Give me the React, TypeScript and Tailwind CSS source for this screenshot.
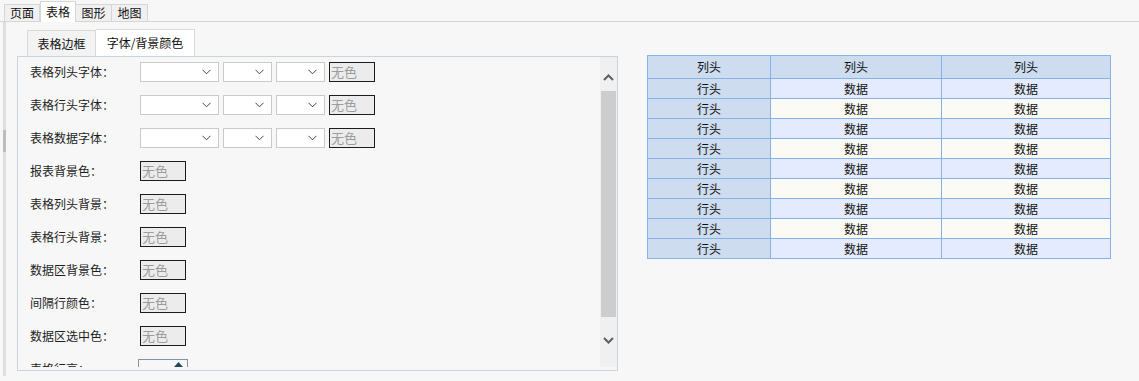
const FONT = '[font-family:"Noto_Sans_CJK_SC","Noto_Sans",sans-serif]';

const topTabs = ['页面', '表格', '图形', '地图'];

function Chevron({ className = '' }: { className?: string }) {
  return (
    <svg width="9" height="6" viewBox="0 0 9 6" className={className}>
      <polyline points="0.5,0.8 4.5,4.8 8.5,0.8" fill="none" stroke="#444" strokeWidth="1" />
    </svg>
  );
}

function Select({ width }: { width: string }) {
  return (
    <div className={`${width} h-[20px] bg-white border border-[#cacaca] flex items-center justify-end pr-[7px]`}>
      <Chevron />
    </div>
  );
}

function ColorBox() {
  return (
    <div className="w-[46px] h-[20px] border border-[#1c1c1c] bg-[#ececec] text-[#9c9c9c] text-[13px] leading-[18px] pl-[1px]">
      无色
    </div>
  );
}

function Row({ label, children }: { label: string; children: React.ReactNode }) {
  return (
    <div className="flex items-center h-[20px] shrink-0">
      <div className="w-[110px] text-[12px] text-[#1e1e1e]">{label}</div>
      <div className="flex items-center gap-[4px]">{children}</div>
    </div>
  );
}

const colorRows = ['报表背景色：', '表格列头背景：', '表格行头背景：', '数据区背景色：', '间隔行颜色：', '数据区选中色：'];

export default function App() {
  return (
    <div className={`w-[1139px] h-[381px] bg-[#f7f7f7] flex flex-col overflow-hidden ${FONT}`}>
      {/* top tab bar */}
      <div className="h-[22px] flex items-end pl-[4px] border-b border-[#d6d6d6] shrink-0">
        {topTabs.map((t) =>
          t === '表格' ? (
            <div
              key={t}
              className="h-[21px] w-[36px] bg-white border border-b-0 border-[#d6d6d6] -mb-px text-[12px] text-[#111] flex items-center justify-center"
            >
              {t}
            </div>
          ) : (
            <div
              key={t}
              className="h-[17px] w-[36px] bg-[#f0f0f0] border border-b-0 border-l-0 first:border-l border-[#d6d6d6] text-[12px] text-[#111] flex items-center justify-center"
            >
              {t}
            </div>
          )
        )}
      </div>

      <div className="flex flex-1 min-h-0">
        {/* splitter gutter */}
        <div className="w-[7px] pl-[3px] pb-[5px] shrink-0 flex">
          <div className="w-[3px] bg-[#dedede] flex flex-col">
            <div className="h-[108px]" />
            <div className="h-[22px] bg-[#bdbdbd]" />
          </div>
        </div>

        <div className="flex pl-[10px] pt-[7px]">
          {/* left settings */}
          <div className="flex flex-col w-[601px]">
            <div className="flex items-end h-[27px] pl-[10px]">
              <div className="h-[26px] w-[69px] bg-[#f3f3f3] border border-b-0 border-[#d9d9d9] text-[12px] text-[#111] flex items-center justify-center">
                表格边框
              </div>
              <div className="h-[27px] w-[99px] bg-white border border-b-0 border-l-0 border-[#d9d9d9] text-[12px] text-[#111] flex items-center justify-center">
                字体/背景颜色
              </div>
            </div>
            <div className="h-[315px] border border-[#ccd3de] bg-[#f7f7f7] flex pb-[3px]">
              <div className="flex-1 overflow-hidden flex flex-col gap-[13px] pt-[5px] pl-[12px]">
                <Row label="表格列头字体：">
                  <Select width="w-[79px]" />
                  <Select width="w-[49px]" />
                  <Select width="w-[49px]" />
                  <ColorBox />
                </Row>
                <Row label="表格行头字体：">
                  <Select width="w-[79px]" />
                  <Select width="w-[49px]" />
                  <Select width="w-[49px]" />
                  <ColorBox />
                </Row>
                <Row label="表格数据字体：">
                  <Select width="w-[79px]" />
                  <Select width="w-[49px]" />
                  <Select width="w-[49px]" />
                  <ColorBox />
                </Row>
                {colorRows.map((l) => (
                  <Row key={l} label={l}>
                    <ColorBox />
                  </Row>
                ))}
                <Row label="表格行高：">
                  <div className="-ml-[2px] w-[50px] h-[20px] border border-[#8393a8] bg-[#f7f7f7] flex justify-end items-start pr-[4px] pt-[2px]">
                    <svg width="9" height="5" viewBox="0 0 9 5">
                      <polygon points="0,5 4.5,0 9,5" fill="#1e4b57" />
                    </svg>
                  </div>
                </Row>
              </div>
              {/* scrollbar */}
              <div className="w-[17px] bg-[#f0f0f0] flex flex-col shrink-0">
                <div className="h-[34px] flex items-center justify-center pt-[7px]">
                  <svg width="11" height="7" viewBox="0 0 11 7">
                    <polyline points="1,6 5.5,1.5 10,6" fill="none" stroke="#606060" strokeWidth="2" />
                  </svg>
                </div>
                <div className="h-[226px] bg-[#cdcdcd] mx-[1px]" />
                <div className="flex-1 flex items-center justify-center pb-[4px]">
                  <svg width="11" height="7" viewBox="0 0 11 7">
                    <polyline points="1,1 5.5,5.5 10,1" fill="none" stroke="#606060" strokeWidth="2" />
                  </svg>
                </div>
              </div>
            </div>
          </div>

          {/* preview table */}
          <div className="ml-[29px] pt-[26px]">
            <div className="border-l border-t border-[#84b3e6] text-[12px] text-[#111]">
              <div className="flex h-[23px] bg-[#cddcef]">
                {['列头', '列头', '列头'].map((c, i) => (
                  <div
                    key={i}
                    className={`${i === 0 ? 'w-[123px]' : i === 1 ? 'w-[171px]' : 'w-[169px]'} border-r border-b border-[#84b3e6] flex items-center justify-center`}
                  >
                    {c}
                  </div>
                ))}
              </div>
              {Array.from({ length: 9 }).map((_, r) => (
                <div key={r} className={`flex h-[20px] ${r % 2 === 0 ? 'bg-[#e4ebfe]' : 'bg-[#fbfaf4]'}`}>
                  <div className="w-[123px] bg-[#cddcef] border-r border-b border-[#84b3e6] flex items-center justify-center">
                    行头
                  </div>
                  <div className="w-[171px] border-r border-b border-[#84b3e6] flex items-center justify-center">数据</div>
                  <div className="w-[169px] border-r border-b border-[#84b3e6] flex items-center justify-center">数据</div>
                </div>
              ))}
            </div>
          </div>
        </div>
      </div>
    </div>
  );
}
